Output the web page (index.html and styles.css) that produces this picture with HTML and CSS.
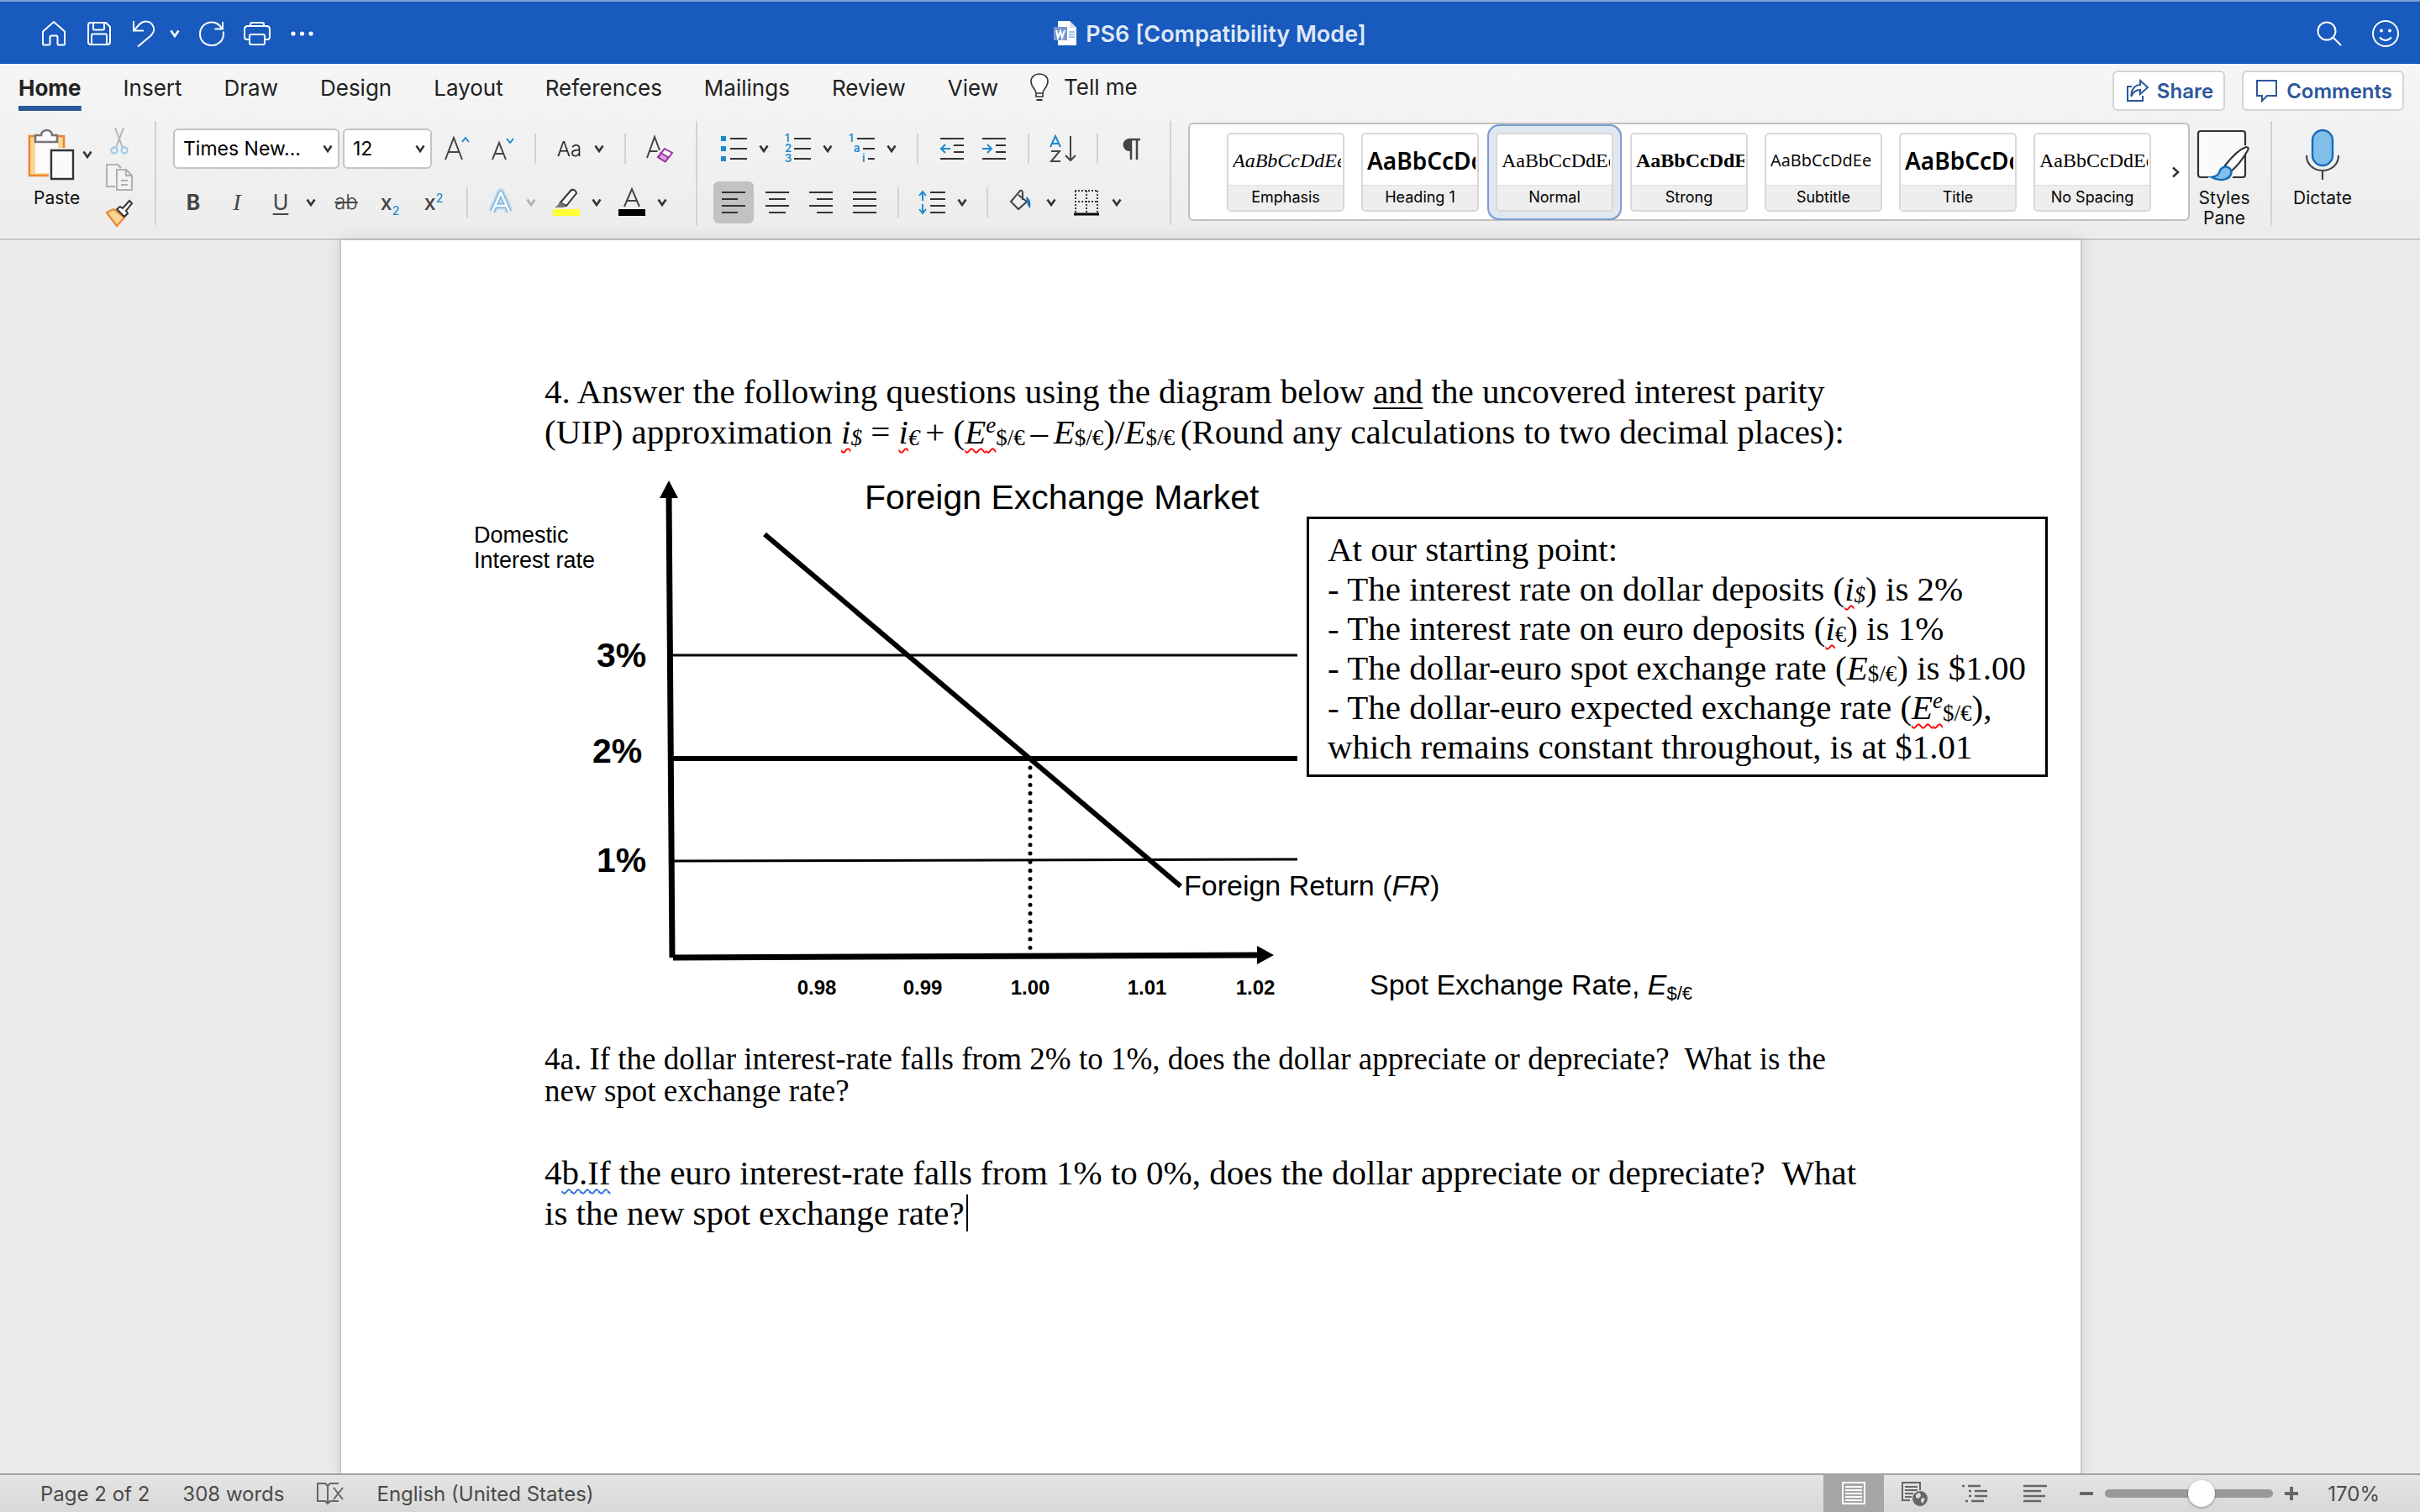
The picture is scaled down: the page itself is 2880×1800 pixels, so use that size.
FILE: index.html
```html
<!DOCTYPE html>
<html lang="en">
<head>
    <meta charset="utf-8">
    <title>PS6 [Compatibility Mode]</title>
    <link rel="stylesheet" href="styles.css">
</head>
<body>
    <svg class="sprite" aria-hidden="true">
        <symbol id="chev" viewBox="0 0 12 10"><path d="M1.500 1.500L6 8l4.500-6.500" fill="none" stroke="currentColor" stroke-width="2.600"/></symbol>
    </svg>

    <header class="titlebar">
        <div class="quick quick-left">
            <button aria-label="Home"><svg width="32" height="32" viewBox="0 0 32 32"><path d="M3 13.500L16 2l13 11.500V28q0 1.500-1.500 1.500H22q-1.500 0-1.500-1.500v-8q0-1.500-1.500-1.500h-6q-1.500 0-1.500 1.500v8q0 1.500-1.500 1.500H4.500Q3 29.500 3 28z"/></svg></button>
            <button aria-label="Save"><svg width="32" height="32" viewBox="0 0 32 32"><path d="M6 3h18l5 5v18q0 3-3 3H6q-3 0-3-3V6q0-3 3-3zM9 3v7q0 1.500 1.500 1.500h10Q22 11.500 22 10V3M7 29V18q0-1.500 1.500-1.500h15Q25 16.500 25 18v11"/></svg></button>
            <span class="split">
                <button aria-label="Undo"><svg width="32" height="32" viewBox="0 0 32 32"><path d="M3 1v11.500h12M3.500 12L10 5c5-5 12-4 15 0s3 9-1 13L8 31.500"/></svg></button>
                <button aria-label="Undo list"><svg class="chev" width="12" height="10"><use href="#chev"/></svg></button>
            </span>
            <button aria-label="Redo"><svg width="32" height="32" viewBox="0 0 32 32"><path d="M29 2v8.500h-9.500M27.500 9.500C25 5 21 2.500 16 2.500 8 2.500 2 8.500 2 16.500S8 30 16 30s14-6 14-13.500q0-1.500-.4-3"/></svg></button>
            <button aria-label="Print"><svg width="32" height="32" viewBox="0 0 32 32"><path d="M8 7V5q0-2 2-2h12q2 0 2 2v2M7 23H4q-3 0-3-3v-9q0-4 4-4h22q4 0 4 4v9q0 3-3 3h-3M9 17h14q2 0 2 2v8q0 2-2 2H9q-2 0-2-2v-8q0-2 2-2z"/></svg></button>
            <button aria-label="More"><svg width="32" height="32" viewBox="0 0 32 32"><g class="solid"><circle cx="5" cy="16" r="2.600"/><circle cx="15.500" cy="16" r="2.600"/><circle cx="26" cy="16" r="2.600"/></g></svg></button>
        </div>
        <h1 class="doc-name">
            <svg width="28" height="30" viewBox="0 0 28 30"><path d="M5 0h14l8 8v21H5z" fill="#fff"/><path d="M19 0v8h8z" fill="#d5dff0"/><path d="M0 7h16v16H0z" fill="#7b98cc"/><path d="M3 11l2 9 3-8 2 8 3-9" fill="none" stroke="#fff" stroke-width="2"/><path d="M18 13h7M18 16h7M18 19h7" stroke="#7db4e6" stroke-width="1.500"/></svg>
            PS6 [Compatibility Mode]
        </h1>
        <div class="quick quick-right">
            <button aria-label="Search"><svg width="32" height="32" viewBox="0 0 32 32"><circle cx="13" cy="13" r="10.500"/><path d="M20.500 20.500l9.500 9.500"/></svg></button>
            <button aria-label="Feedback"><svg width="34" height="34" viewBox="0 0 34 34"><circle cx="17" cy="17" r="15"/><path d="M10 21.500q7 7 14 0"/><g class="solid"><circle cx="12" cy="13.500" r="2"/><circle cx="22" cy="13.500" r="2"/></g></svg></button>
        </div>
    </header>

    <div class="ribbon">
        <nav class="tabs">
            <a href="#" class="active">Home</a>
            <a href="#">Insert</a>
            <a href="#">Draw</a>
            <a href="#">Design</a>
            <a href="#">Layout</a>
            <a href="#">References</a>
            <a href="#">Mailings</a>
            <a href="#">Review</a>
            <a href="#">View</a>
            <a href="#" class="tell-me">
                <svg width="22" height="34" viewBox="0 0 22 34"><path d="M7 24c0-5-6-7-6-14C1 4.500 5.500 1 11 1s10 3.500 10 9c0 7-6 9-6 14zM7 24v4h8v-4" fill="#fff" stroke="#333" stroke-width="1.600"/><path d="M7.500 32h7" stroke="#333" stroke-width="2"/></svg>
                Tell me
            </a>
            <div class="tab-actions">
                <button class="pill"><svg width="28" height="28" viewBox="0 0 28 28"><path d="M7 9H2v17h18v-6M17 2l9 8-9 8v-5c-6 0-9 3-10.500 8C6 13 10 7.500 17 7z" fill="none" stroke="currentColor" stroke-width="2"/></svg>Share</button>
                <button class="pill"><svg width="28" height="28" viewBox="0 0 28 28"><path d="M2 2h23v18H14l-6 6v-6H2z" fill="none" stroke="currentColor" stroke-width="2"/></svg>Comments</button>
            </div>
        </nav>

        <div class="tools">
            <div class="clipboard">
                <div class="big-tool">
                    <button class="split" aria-label="Paste options">
                        <svg width="58" height="62" viewBox="0 0 58 62"><path d="M3 9h41v47H3z" fill="#f9d894" stroke="#ed8532" stroke-width="2.600"/><path d="M10 16h27v37H10z" fill="#fbfbfb"/><path d="M10 8h7c0-8 13-8 13 0h6v8H10z" fill="#fbfbfb" stroke="#777" stroke-width="2.600"/><path d="M26 23h32v39H26z" fill="#f3f3f3"/><path d="M29 26h26v34H29z" fill="#fafafa" stroke="#333" stroke-width="2.400"/></svg>
                        <svg class="chev" width="12" height="10"><use href="#chev"/></svg>
                    </button>
                    <span>Paste</span>
                </div>
                <div class="stack">
                    <button aria-label="Cut"><svg width="32" height="34" viewBox="0 0 32 34"><path d="M11 2l9 24M21 2l-9 24" fill="none" stroke="#b5b5b5" stroke-width="2"/><g fill="none" stroke="#9ccbe8" stroke-width="2.200"><circle cx="10" cy="29" r="3.600"/><circle cx="22" cy="29" r="3.600"/></g></svg></button>
                    <button aria-label="Copy"><svg width="32" height="34" viewBox="0 0 32 34"><g fill="#f3f3f3" stroke="#b0b0b0" stroke-width="2"><path d="M11 28H1V2h13l4 4"/><path d="M13 8h11l7 7v17H13z"/><path d="M24 8v7h7M18 21h8M18 26h8" fill="none"/></g></svg></button>
                    <button aria-label="Format painter"><svg width="32" height="32" viewBox="0 0 32 32"><path d="M9 11l13 10-9 10L1 15z" fill="#f9d894" stroke="#ed8532" stroke-width="2.200"/><path d="M13 11l4-3 3 2 8-9 3 3-7 9 2 3-4 4z" fill="#fafafa" stroke="#333" stroke-width="2"/></svg></button>
                </div>
            </div>
            <div class="divider"></div>

            <div class="group group-font">
                <div class="row fonts">
                    <div class="fields">
                        <label class="field name-field"><select aria-label="Font"><option>Times New...</option></select><svg class="chev" width="12" height="10"><use href="#chev"/></svg></label>
                        <label class="field size-field"><select aria-label="Font size"><option>12</option></select><svg class="chev" width="12" height="10"><use href="#chev"/></svg></label>
                    </div>
                    <div class="row wide">
                        <button aria-label="Grow font"><svg width="32" height="32" viewBox="0 0 32 32"><path d="M2 29L12 3l10 26M5.500 20h13" class="ink"/><path d="M22 8l4-5 4 5" class="blue"/></svg></button>
                        <button aria-label="Shrink font"><svg width="28" height="32" viewBox="0 0 28 32"><path d="M2 29L10 9l8 20M5 22h10" class="ink"/><path d="M19 4l4 5 4-5" class="blue"/></svg></button>
                        <i class="sep"></i>
                        <span class="split"><button class="case">Aa</button><svg class="chev" width="12" height="10"><use href="#chev"/></svg></span>
                        <i class="sep"></i>
                        <button aria-label="Clear formatting"><svg width="32" height="34" viewBox="0 0 32 34"><path d="M1 28L10 3l6 16M4.500 20h9" class="ink"/><path d="M22 17l9 5-8 10-9-5z" fill="#fff" stroke="#9b30a5" stroke-width="2"/><path d="M17.500 22l9 5.500-4 5-8-5z" fill="#d9a0de" stroke="#9b30a5" stroke-width="2"/></svg></button>
                    </div>
                </div>
                <div class="row letters">
                    <button class="letter bold">B</button>
                    <button class="letter italic">I</button>
                    <span class="split"><button class="letter under">U</button><svg class="chev" width="12" height="10"><use href="#chev"/></svg></span>
                    <button class="letter strike">ab</button>
                    <button class="letter script">x<sub>2</sub></button>
                    <button class="letter script">x<sup>2</sup></button>
                    <i class="sep"></i>
                    <span class="split dim"><button aria-label="Text effects"><svg width="32" height="34" viewBox="0 0 32 34"><g fill="none" stroke-linejoin="round"><path d="M6 28L16 5l10 23M10 21h12" stroke="#c4dcee" stroke-width="10"/><path d="M6 28L16 5l10 23M10 21h12" stroke="#8ab8dc" stroke-width="6"/><path d="M6 28L16 5l10 23M10 21h12" stroke="#fff" stroke-width="2.500"/></g></svg></button><svg class="chev" width="12" height="10"><use href="#chev"/></svg></span>
                    <span class="split"><button aria-label="Highlight"><svg width="32" height="34" viewBox="0 0 32 34"><path d="M9 17L22 2q5-1 6 4L16 21z" fill="#fafafa" stroke="#333" stroke-width="2"/><path d="M8 16l8 6-4 1H2l4-3z" fill="#777"/><path d="M0 25h32v8H0z" fill="#ffff33"/></svg></button><svg class="chev" width="12" height="10"><use href="#chev"/></svg></span>
                    <span class="split"><button aria-label="Font color"><svg width="32" height="34" viewBox="0 0 32 34"><path d="M7 22l9-21 9 21M10.500 15h11" class="ink"/><path d="M0 25h32v8H0z" fill="#000"/></svg></button><svg class="chev" width="12" height="10"><use href="#chev"/></svg></span>
                </div>
            </div>
            <div class="divider"></div>

            <div class="group group-para">
                <div class="row lists">
                    <span class="split"><button aria-label="Bullets"><svg width="32" height="34" viewBox="0 0 32 34"><path d="M12 5h20M12 17h20M12 29h20" class="rule"/><path d="M1 2h6v6H1zM1 14h6v6H1zM1 26h6v6H1z" fill="#1e8bcd"/></svg></button><svg class="chev" width="12" height="10"><use href="#chev"/></svg></span>
                    <span class="split"><button aria-label="Numbering"><svg width="32" height="34" viewBox="0 0 32 34"><path d="M12 5h20M12 17h20M12 29h20" class="rule"/><g class="num"><text x="1" y="9">1</text><text x="1" y="21">2</text><text x="1" y="33">3</text></g></svg></button><svg class="chev" width="12" height="10"><use href="#chev"/></svg></span>
                    <span class="split"><button aria-label="Multilevel list"><svg width="32" height="34" viewBox="0 0 32 34"><path d="M11 5h21M18 17h14M24 29h8" class="rule"/><g class="num"><text x="1" y="9">1</text><text x="7" y="21">a</text><text x="17" y="33">i</text></g></svg></button><svg class="chev" width="12" height="10"><use href="#chev"/></svg></span>
                    <i class="sep"></i>
                    <button aria-label="Decrease indent"><svg width="32" height="34" viewBox="0 0 32 34"><path d="M2 5h28M18 13h12M18 21h12M2 29h28" class="rule"/><path d="M14 17H3M8 12l-5 5 5 5" class="blue"/></svg></button>
                    <button aria-label="Increase indent"><svg width="32" height="34" viewBox="0 0 32 34"><path d="M2 5h28M18 13h12M18 21h12M2 29h28" class="rule"/><path d="M2 17h11M8 12l5 5-5 5" class="blue"/></svg></button>
                    <i class="sep"></i>
                    <button aria-label="Sort"><svg width="32" height="34" viewBox="0 0 32 34"><path d="M1 15L7 2l6 13M3 11h8" class="blue"/><path d="M2 20h10L2 32h11M25 2v29M19 25l6 6 6-6" class="ink"/></svg></button>
                    <i class="sep"></i>
                    <button aria-label="Show marks"><svg width="32" height="34" viewBox="0 0 32 34"><path d="M13 5a7 7 0 0 0 0 15h2V5z" fill="#444"/><path d="M12 6h14M15 6v24M22 6v24" fill="none" stroke="#444" stroke-width="2.500"/></svg></button>
                </div>
                <div class="row aligns">
                    <button class="on" aria-label="Align left"><svg width="32" height="34" viewBox="0 0 32 34"><path d="M2 5h28M2 13h19M2 21h28M2 29h19" class="rule"/></svg></button>
                    <button aria-label="Center"><svg width="32" height="34" viewBox="0 0 32 34"><path d="M2 5h28M6 13h20M2 21h28M6 29h20" class="rule"/></svg></button>
                    <button aria-label="Align right"><svg width="32" height="34" viewBox="0 0 32 34"><path d="M2 5h28M11 13h19M2 21h28M11 29h19" class="rule"/></svg></button>
                    <button aria-label="Justify"><svg width="32" height="34" viewBox="0 0 32 34"><path d="M2 5h28M2 13h28M2 21h28M2 29h28" class="rule"/></svg></button>
                    <i class="sep"></i>
                    <span class="split"><button aria-label="Line spacing"><svg width="32" height="34" viewBox="0 0 32 34"><path d="M14 5h18M14 13h18M14 21h18M14 29h18" class="rule"/><path d="M5 15V4M1 9l4-5 4 5M5 19v11M1 25l4 5 4-5" class="blue"/></svg></button><svg class="chev" width="12" height="10"><use href="#chev"/></svg></span>
                    <i class="sep"></i>
                    <span class="split"><button aria-label="Shading"><svg width="32" height="34" viewBox="0 0 32 34"><path d="M13 8l10 8-10 9-9-9L15 3q3-1 3 3v8" class="ink"/><path d="M22 10q7 3 5 14-3-2-4-8z" fill="#1e78c2"/></svg></button><svg class="chev" width="12" height="10"><use href="#chev"/></svg></span>
                    <span class="split"><button aria-label="Borders"><svg width="32" height="34" viewBox="0 0 32 34"><path d="M2 3h28M2 16h28M3 3v26M16 3v26M29 3v26" fill="none" stroke="#333" stroke-width="2" stroke-dasharray="2 2"/><path d="M1 31h30" stroke="#000" stroke-width="3"/></svg></button><svg class="chev" width="12" height="10"><use href="#chev"/></svg></span>
                </div>
            </div>
            <div class="divider"></div>

            <div class="gallery">
                <button class="card"><span class="preview serif italic">AaBbCcDdEe</span><span class="caption">Emphasis</span></button>
                <button class="card"><span class="preview heading">AaBbCcDdEe</span><span class="caption">Heading 1</span></button>
                <button class="card selected"><span class="preview serif">AaBbCcDdEe</span><span class="caption">Normal</span></button>
                <button class="card"><span class="preview serif bold">AaBbCcDdEe</span><span class="caption">Strong</span></button>
                <button class="card"><span class="preview light">AaBbCcDdEe</span><span class="caption">Subtitle</span></button>
                <button class="card"><span class="preview heading">AaBbCcDdEe</span><span class="caption">Title</span></button>
                <button class="card"><span class="preview serif">AaBbCcDdEe</span><span class="caption">No Spacing</span></button>
                <button class="more" aria-label="More styles"><svg width="10" height="14" viewBox="0 0 10 14"><path d="M2 1.500L8 7l-6 5.500" fill="none" stroke="#333" stroke-width="2.500"/></svg></button>
            </div>
            <button class="big-tool">
                <svg width="66" height="62" viewBox="0 0 66 62"><path d="M5 3h50q3 0 3 3v49q0 3-3 3H5q-3 0-3-3V6q0-3 3-3z" fill="#fafafa" stroke="#333" stroke-width="2.200"/><path d="M62 20L42 60H12l20-16 20-24z" fill="#f3f3f3"/><path d="M34 44Q48 26 59 22q4 0 2 4Q52 42 40 52z" fill="#fff" stroke="#333" stroke-width="2.200"/><path d="M18 58q8-1 10-8c2-5 9-6 12-2s1 10-5 12q-8 3-17-2z" fill="#83bdea" stroke="#0f6cbd" stroke-width="2.400"/></svg>
                <span>Styles<br>Pane</span>
            </button>
            <div class="divider"></div>
            <button class="big-tool dictate">
                <svg width="42" height="62" viewBox="0 0 42 62"><rect x="9" y="2" width="24" height="42" rx="12" fill="#83bdea" stroke="#0f6cbd" stroke-width="2.400"/><path d="M2 32c0 24 38 24 38 0M21 50v11" fill="none" stroke="#444" stroke-width="2.200"/></svg>
                <span>Dictate</span>
            </button>
        </div>
    </div>

    <main class="workspace">
        <article class="page">
            <p class="para">4. Answer the following questions using the diagram below <u>and</u> the uncovered interest parity<br>
                (UIP) approximation <em><span class="typo">i</span><sub>$</sub></em> = <em><span class="typo">i</span><sub>€</sub></em><sub> </sub>+ (<em class="typo">E<sup>e</sup></em><sub>$/€ </sub>–<sub> </sub><em>E</em><sub>$/€</sub>)/<em>E</em><sub>$/€ </sub>(Round any calculations to two decimal places):</p>

            <div class="figure">
                <svg class="chart" width="1900" height="704" viewBox="0 0 1900 704">
                    <!-- axes -->
                    <path d="M256 50L260 602" stroke="#000" stroke-width="7"/>
                    <path d="M256 34l11 21h-22z"/>
                    <path d="M261 602L958 599" stroke="#000" stroke-width="7"/>
                    <path d="M976 599l-20-11v22z"/>
                    <!-- interest rate levels -->
                    <path d="M260 242H1004" stroke="#000" stroke-width="3"/>
                    <path d="M260 365H1004" stroke="#000" stroke-width="6"/>
                    <path d="M262 487L1004 485" stroke="#000" stroke-width="3"/>
                    <path d="M370 98L865 517" stroke="#000" stroke-width="6"/>
                    <path d="M686 376V596" stroke="#000" stroke-width="5" stroke-linecap="round" stroke-dasharray="0 10.200"/>

                    <text class="t-title" x="489" y="68">Foreign Exchange Market</text>
                    <text class="t-axis" x="24" y="108">Domestic</text>
                    <text class="t-axis" x="24" y="138">Interest rate</text>
                    <text class="t-rate" x="170" y="256">3%</text>
                    <text class="t-rate" x="165" y="370">2%</text>
                    <text class="t-rate" x="170" y="500">1%</text>
                    <text class="t-tick" x="432" y="646">0.98</text>
                    <text class="t-tick" x="558" y="646">0.99</text>
                    <text class="t-tick" x="686" y="646">1.00</text>
                    <text class="t-tick" x="825" y="646">1.01</text>
                    <text class="t-tick" x="954" y="646">1.02</text>
                    <text class="t-label" x="869" y="528">Foreign Return (<tspan font-style="italic">FR</tspan>)</text>
                    <text class="t-label" x="1090" y="646">Spot Exchange Rate, <tspan font-style="italic">E</tspan><tspan class="t-sub" dy="6">$/€</tspan></text>
                </svg>
                <div class="callout">
                    At our starting point:<br>
                    - The interest rate on dollar deposits (<em><span class="typo">i</span><sub>$</sub></em>) is 2%<br>
                    - The interest rate on euro deposits (<em><span class="typo">i</span></em><sub>€</sub>) is 1%<br>
                    - The dollar-euro spot exchange rate (<em>E</em><sub>$/€</sub>) is $1.00<br>
                    - The dollar-euro expected exchange rate (<em class="typo">E<sup>e</sup></em><sub>$/€</sub>),<br>
                    which remains constant throughout, is at $1.01
                </div>
            </div>

            <p class="para tight">4a. If the dollar interest-rate falls from 2% to 1%, does the dollar appreciate or depreciate?&nbsp; What is the<br>
                new spot exchange rate?</p>
            <p class="para last">4<span class="grammar">b.If</span> the euro interest-rate falls from 1% to 0%, does the dollar appreciate or depreciate?&nbsp; What<br>
                is the new spot exchange rate?<span class="caret"></span></p>
        </article>
    </main>

    <footer class="status">
        <span>Page 2 of 2</span>
        <span>308 words</span>
        <button aria-label="Proofing"><svg width="32" height="30" viewBox="0 0 32 30"><path d="M26 3H16l-3 3-3-3H1v21h9l3 3 3-3h10M13 6v22M20 8l11 14M31 8L20 22" fill="none" stroke="#666" stroke-width="2"/></svg></button>
        <span>English (United States)</span>
        <div class="views">
            <button class="view on" aria-label="Print layout"><svg width="32" height="32" viewBox="0 0 32 32"><path d="M3 3h26v25H3zM6 8h20M6 12h20M6 16h20M6 20h20M6 24h20" fill="none" stroke="#fff" stroke-width="2"/></svg></button>
            <button class="view" aria-label="Web layout"><svg width="32" height="32" viewBox="0 0 32 32"><path d="M11 24H2V3h21v9M5 8h15M5 12h15M5 16h10M5 20h8" fill="none" stroke="#666" stroke-width="2"/><circle cx="23" cy="22" r="9" fill="#666"/><path d="M18 17l5-2 1 4-3 3-3-1zM25 21l4 1-3 6-2-3z" fill="#ddd"/></svg></button>
            <button class="view" aria-label="Outline"><svg width="32" height="32" viewBox="0 0 32 32"><path d="M1 7h3M8 7h15M9 13h3M16 13h15M9 19h3M16 19h15M5 25h3M12 25h15" stroke="#666" stroke-width="2.500"/></svg></button>
            <button class="view" aria-label="Draft"><svg width="32" height="32" viewBox="0 0 32 32"><path d="M2 7h28M2 13h21M2 19h26M2 25h21" stroke="#666" stroke-width="2.500"/></svg></button>
        </div>
        <div class="zoom-bar">
            <button aria-label="Zoom out"><svg width="16" height="16" viewBox="0 0 16 16"><path d="M0 8h16" stroke="#666" stroke-width="4"/></svg></button>
            <input class="zoom" type="range" min="0" max="100" value="59" aria-label="Zoom">
            <button aria-label="Zoom in"><svg width="16" height="16" viewBox="0 0 16 16"><path d="M0 8h16M8 0v16" stroke="#666" stroke-width="4"/></svg></button>
        </div>
        <span class="percent">170%</span>
    </footer>
</body>
</html>
```
FILE: styles.css
```css
* {
    box-sizing: border-box;
}
body {
    margin: 0;
    height: 100vh;
    display: flex;
    flex-direction: column;
    overflow: hidden;
    font-family: Inter, sans-serif;
    font-size: 26px;
    color: #222;
    background: #ebebeb;
}
button {
    font: inherit;
    color: inherit;
    background: none;
    border: 0;
    padding: 0;
    flex: none;
}
svg {
    display: block;
    flex: none;
    overflow: visible;
}
.sprite {
    position: absolute;
    width: 0;
    height: 0;
}
.ink {
    fill: none;
    stroke: #444;
    stroke-width: 2;
}
.blue {
    fill: none;
    stroke: #1e8bcd;
    stroke-width: 2;
}
.rule {
    fill: none;
    stroke: #333;
    stroke-width: 2;
}
.num {
    font-size: 13px;
    font-weight: 600;
    fill: #1e8bcd;
}
.chev {
    color: #333;
}

/* title bar */
.titlebar {
    display: grid;
    grid-template-columns: 1fr auto 1fr;
    align-items: center;
    height: 76px;
    padding: 2px 24px 0;
    border-top: 2px solid #7ba0d8;
    background: #185abd;
    color: #fff;
}
.quick {
    display: flex;
    align-items: center;
    gap: 22px;
}
.quick svg {
    fill: none;
    stroke: #fff;
    stroke-width: 2;
}
.quick .solid {
    fill: #fff;
    stroke: none;
}
.quick .chev {
    color: #fff;
}
.quick-left {
    padding-left: 24px;
}
.quick-right {
    justify-content: flex-end;
    gap: 34px;
}
.doc-name {
    display: flex;
    align-items: center;
    gap: 10px;
    margin: 0;
    font-size: 27px;
    font-weight: 600;
    color: #dfe8f6;
}
.split {
    display: flex;
    align-items: center;
    gap: 14px;
}

/* ribbon */
.ribbon {
    background: linear-gradient(#f6f6f6, #ececec);
    border-bottom: 2px solid #c6c6c6;
    height: 210px;
    flex: none;
}
.tabs {
    display: flex;
    gap: 50px;
    height: 64px;
    padding: 0 19px 0 22px;
}
.tabs a {
    color: inherit;
    text-decoration: none;
    height: 56px;
    line-height: 58px;
}
.tabs .active {
    font-weight: 700;
    background: linear-gradient(#2b579a, #2b579a) bottom / 100% 6px no-repeat;
}
.tabs .tell-me {
    display: flex;
    align-items: center;
    gap: 18px;
    margin-left: -12px;
}
.tab-actions {
    display: flex;
    gap: 20px;
    margin-left: auto;
    padding-top: 8px;
}
.pill {
    display: flex;
    align-items: center;
    gap: 9px;
    height: 48px;
    padding: 0 12px 0 14px;
    border: 2px solid #d4d4d4;
    border-radius: 6px;
    background: #fff;
    font-size: 24px;
    font-weight: 600;
    color: #2b579a;
}
.tools {
    display: flex;
    padding: 0 80px 0 32px;
}
.divider {
    width: 2px;
    height: 124px;
    margin-top: 4px;
    background: #d2d2d2;
    flex: none;
}
.clipboard {
    display: flex;
    gap: 16px;
    width: 152px;
}
.big-tool {
    display: flex;
    flex-direction: column;
    align-items: center;
    gap: 9px;
    padding-top: 13px;
    font-size: 21px;
    line-height: 24px;
    color: #111;
}
.clipboard .big-tool {
    align-items: flex-start;
}
.clipboard .big-tool span {
    padding-left: 8px;
}
.clipboard .split {
    gap: 8px;
}
.stack {
    display: flex;
    flex-direction: column;
    gap: 10px;
    padding-top: 10px;
}
.group {
    display: flex;
    flex-direction: column;
    gap: 14px;
    padding-top: 12px;
}
.group-font {
    width: 642px;
    padding-left: 20px;
}
.group-para {
    width: 562px;
    padding-left: 27px;
}
.row {
    display: flex;
    align-items: center;
    height: 50px;
}
.fonts {
    gap: 14px;
}
.wide {
    gap: 24px;
}
.letters {
    gap: 20px;
    padding-left: 8px;
}
.lists {
    gap: 18px;
}
.lists .sep {
    margin: 0 6px;
}
.aligns {
    gap: 20px;
}
.letters .sep,
.aligns .sep {
    margin: 0 3px;
}
.sep {
    width: 2px;
    height: 36px;
    background: #d2d2d2;
}
.fields {
    display: flex;
    gap: 4px;
}
.field {
    display: flex;
    align-items: center;
    height: 48px;
    padding-right: 6px;
    border: 2px solid #c4c4c4;
    border-radius: 6px;
    background: #fff;
}
.field select {
    appearance: none;
    flex: 1;
    min-width: 0;
    height: 44px;
    padding: 0 0 0 10px;
    border: 0;
    background: none;
    font: inherit;
    font-size: 23px;
    color: #000;
}
.name-field {
    width: 198px;
}
.size-field {
    width: 106px;
}
.case {
    width: 31px;
    font-size: 24px;
    font-weight: 300;
}
.letter {
    width: 32px;
    height: 34px;
    font-size: 25px;
    line-height: 34px;
    color: #444;
    white-space: nowrap;
}
.bold {
    font-weight: 700;
}
.italic {
    font-style: italic;
}
.letter.italic {
    font-family: "Liberation Serif", serif;
    font-size: 28px;
}
.under {
    text-decoration: underline;
    text-underline-offset: 4px;
}
.strike {
    text-decoration: line-through;
    font-size: 24px;
    font-weight: 300;
}
.script {
    font-weight: 500;
}
.script sub,
.script sup {
    font-size: 14px;
    line-height: 0;
    color: #1e8bcd;
}
.dim .chev {
    color: #b0b0b0;
}
.on {
    background: #c2c2c2;
}
.aligns .on {
    padding: 8px;
    margin: -8px;
    border-radius: 6px;
}

/* styles gallery */
.gallery {
    display: flex;
    align-items: center;
    gap: 20px;
    flex: 1;
    min-width: 0;
    height: 117px;
    margin: 6px 7px 0 20px;
    padding: 0 10px 0 44px;
    border: 2px solid #c0c0c0;
    border-radius: 6px;
    background: #fff;
}
.card {
    width: 140px;
    height: 94px;
    border: 2px solid #d8d8d8;
    border-radius: 5px;
    background: #fff;
    overflow: hidden;
    color: #000;
}
.card.selected {
    box-shadow: 0 0 0 8px #dfe7f1, 0 0 0 10px #7a9fd0;
}
.preview {
    display: block;
    height: 60px;
    margin: 0 2px 0 5px;
    line-height: 62px;
    font-size: 24px;
    text-align: left;
    overflow: hidden;
}
.serif {
    font-family: "Liberation Serif", serif;
}
.heading {
    font-family: "Noto Sans", sans-serif;
    font-size: 28px;
    font-weight: 600;
}
.light {
    font-family: "Open Sans", sans-serif;
    font-size: 20px;
}
.caption {
    display: block;
    height: 32px;
    line-height: 28px;
    font-size: 18px;
    border-top: 1px solid #e0e0e0;
    background: #eee;
}
.more {
    margin-left: auto;
}
.tools > .big-tool {
    width: 68px;
}
.tools > .big-tool + .divider {
    margin-left: 21px;
}
.tools > .dictate {
    width: 72px;
    margin-left: 24px;
}

/* document */
.workspace {
    flex: 1;
    min-height: 0;
    display: flex;
    padding: 0 402px 0 404px;
}
.page {
    flex: 1;
    min-width: 0;
    padding: 156px 0 0 242px;
    border: solid #c9c9c9;
    border-width: 0 2px;
    box-shadow: 0 0 16px rgba(0, 0, 0, 0.12);
    background: #fff;
    color: #000;
    font-family: "Liberation Serif", serif;
    font-size: 41px;
    line-height: 48px;
    white-space: nowrap;
}
.para {
    margin: 0;
}
.para u {
    text-decoration-thickness: 2px;
    text-underline-offset: 5px;
}
.page sub,
.page sup {
    font-size: 27px;
    line-height: 0;
}
.page sub {
    vertical-align: -2px;
}
.page sup {
    vertical-align: 13px;
}
.typo {
    text-decoration: underline wavy #f00 2px;
    text-underline-offset: 5px;
    text-decoration-skip-ink: none;
}
.grammar {
    text-decoration: underline wavy #2a6be0 2px;
    text-underline-offset: 5px;
    text-decoration-skip-ink: none;
}
.tight {
    font-size: 37px;
    line-height: 38px;
}
.last {
    margin-top: 54px;
}
.caret {
    display: inline-block;
    width: 2px;
    height: 44px;
    margin-left: 2px;
    vertical-align: -8px;
    background: #000;
}
.figure {
    position: relative;
    margin-left: -108px;
}
.chart {
    font-family: "Liberation Sans", sans-serif;
}
.t-title {
    font-size: 41px;
}
.t-axis {
    font-size: 27px;
}
.t-rate {
    font-size: 41px;
    font-weight: 700;
}
.t-tick {
    font-size: 24px;
    font-weight: 700;
    text-anchor: middle;
}
.t-label {
    font-size: 34px;
}
.t-sub {
    font-size: 22px;
}
.callout {
    position: absolute;
    left: 1015px;
    top: 77px;
    width: 882px;
    padding: 13px 0 9px 22px;
    border: 3px solid #000;
    background: #fff;
    line-height: 47px;
}

/* status bar */
.status {
    display: flex;
    align-items: center;
    height: 46px;
    flex: none;
    gap: 39px;
    padding: 0 48px;
    border-top: 2px solid #a3a3a3;
    background: linear-gradient(#e4e4e4, #d8d8d8);
    font-size: 24px;
    color: #4a4a4a;
}
.views {
    display: flex;
    margin-left: auto;
    margin-right: -22px;
    align-self: stretch;
}
.view {
    width: 72px;
    display: grid;
    place-items: center;
}
.view.on {
    background: #a6a6a6;
}
.zoom-bar {
    display: flex;
    align-items: center;
    gap: 14px;
    margin-right: -4px;
}
.zoom {
    appearance: none;
    width: 200px;
    height: 10px;
    margin: 0;
    border-radius: 5px;
    background: #999;
}
.zoom::-webkit-slider-thumb {
    appearance: none;
    width: 32px;
    height: 32px;
    border-radius: 50%;
    background: #fff;
    box-shadow: 0 1px 3px rgba(0, 0, 0, 0.4);
}
```
